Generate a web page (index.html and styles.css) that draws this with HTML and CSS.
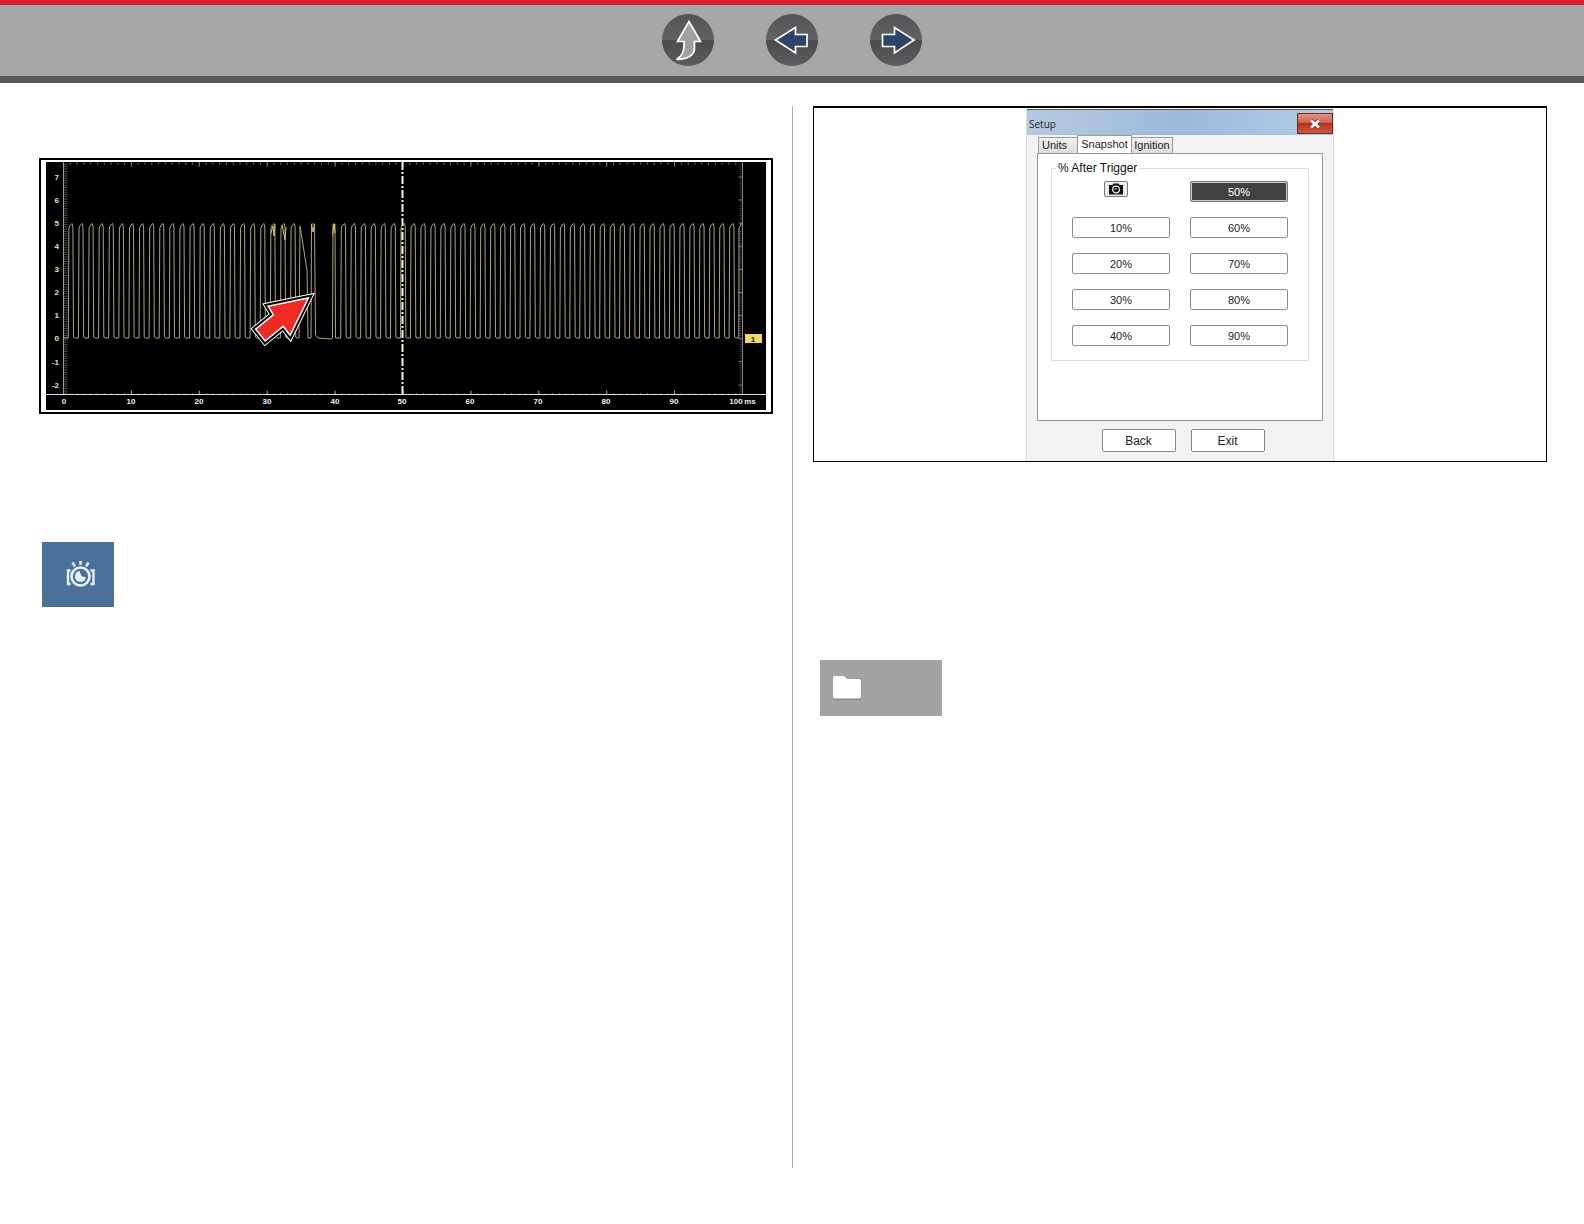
FILE: index.html
```
<!DOCTYPE html>
<html lang="en">
<head>
<meta charset="utf-8">
<meta name="viewport" content="width=device-width, initial-scale=1">
<title>Snapshot Setup</title>
<link rel="stylesheet" href="styles.css">
</head>
<body>
<header class="topbar">
  <nav class="topbar-nav" aria-label="Page navigation">
    <a href="#up" class="nav-link" aria-label="Up">
      <svg viewBox="0 0 52 52"><path d="M27 7.500 38.500 27.500H32.500V34C32.500 41 26 45 14.500 45.500 20.500 42 22 38 22 32V27.500H15.500Z" fill="#a0a0a0" stroke="#fff" stroke-width="1.700"/></svg>
    </a>
    <a href="#previous" class="nav-link" aria-label="Previous">
      <svg viewBox="0 0 52 52"><path d="M9.500 26 29.500 13.500V20.500H41V32.500H29.500V39Z" fill="#2b4468" stroke="#fff" stroke-width="1.700"/></svg>
    </a>
    <a href="#next" class="nav-link" aria-label="Next">
      <svg viewBox="0 0 52 52"><path d="M44 26 24.500 13.500V20.500H12.500V32.500H24.500V39Z" fill="#2b4468" stroke="#fff" stroke-width="1.700"/></svg>
    </a>
  </nav>
</header>
<main class="page">
  <section class="column column-left">
    <figure class="figure figure-scope">
      <svg class="scope" viewBox="0 0 720 248" role="img" aria-label="Scope waveform with signal dropout">
        <rect width="720" height="248" fill="#000"/>
        <g fill="none">
          <path d="M19.500 2V232" stroke="#4c4c4c" stroke-width="4" stroke-dasharray="1 1.310"/>
          <path d="M694.500 2V232" stroke="#444" stroke-width="2" stroke-dasharray="1 1.310"/>
          <path d="M694.500 14.500V232" stroke="#666" stroke-width="4" stroke-dasharray="1 22.100"/>
          <path d="M17 1.500H696" stroke="#555" stroke-width="3" stroke-dasharray="1 5.790"/>
          <path d="M17 2.500H696" stroke="#777" stroke-width="5" stroke-dasharray="1 66.900"/>
          <path d="M17 231.500H696" stroke="#555" stroke-width="1" stroke-dasharray="1 5.790"/>
          <path d="M17 230.500H696" stroke="#aaa" stroke-width="4" stroke-dasharray="1 66.900"/>
          <path d="M17.500 0V233" stroke="#999"/>
          <path d="M696.500 0V233" stroke="#888"/>
          <path d="M0 232.500H720" stroke="#ddd"/>
          <path id="trace" stroke="#a8a484" stroke-width="1"/>
          <path d="M225 71 227 64 228 74 229 62M236 63 239 78 240 65M265.500 62 267 70 268.500 62M286.500 73 288 62 289 71" stroke="#d8c660"/>
          <path d="M356.500 0V232" stroke="#f4f4ea" stroke-width="2" stroke-dasharray="8 2 2 2"/>
        </g>
        <g class="volt-labels">
          <text x="13" y="18">7</text><text x="13" y="41">6</text><text x="13" y="64">5</text><text x="13" y="87">4</text><text x="13" y="110">3</text>
          <text x="13" y="133">2</text><text x="13" y="156">1</text><text x="13" y="179">0</text><text x="13" y="203">-1</text><text x="13" y="226">-2</text>
        </g>
        <g class="time-labels">
          <text x="18" y="242">0</text><text x="85" y="242">10</text><text x="153" y="242">20</text><text x="221" y="242">30</text><text x="289" y="242">40</text>
          <text x="356" y="242">50</text><text x="424" y="242">60</text><text x="492" y="242">70</text><text x="560" y="242">80</text><text x="628" y="242">90</text>
          <text x="690" y="242">100</text><text x="704" y="242">ms</text>
        </g>
        <rect x="699" y="172" width="17" height="9" fill="#f0d964"/>
        <text class="channel-label" x="707" y="180">1</text>
        <g stroke-miterlimit="8">
          <path d="M261 137 223.300 144.700 228.300 153 210.700 167.300 219.300 178 237.300 163.300 244 172Z" fill="#fff" stroke="#fff" stroke-width="9"/>
          <path d="M261 137 223.300 144.700 228.300 153 210.700 167.300 219.300 178 237.300 163.300 244 172Z" fill="#000" stroke="#000" stroke-width="7"/>
          <path d="M261 137 223.300 144.700 228.300 153 210.700 167.300 219.300 178 237.300 163.300 244 172Z" fill="#fff" stroke="#fff" stroke-width="3"/>
          <path d="M261 137 223.300 144.700 228.300 153 210.700 167.300 219.300 178 237.300 163.300 244 172Z" fill="#ee2a24"/>
        </g>
      </svg>
    </figure>
    <button type="button" class="snapshot-button" aria-label="Snapshot">
      <svg viewBox="0 0 72 65" fill="none" stroke="#e8f4fb" stroke-width="2.600">
        <circle cx="38.500" cy="34.500" r="9"/>
        <path d="M37.500 29A5.500 5.500 0 1 0 44 35.500L39.500 34Z" fill="#e8f4fb" stroke="none"/>
        <path d="M38.500 19V23M30.500 20.500 33 24.500M46.500 20.500 44 24.500M28.500 28.500H26V42H28.500M48.500 28.500H51.500V42H48.500" stroke-width="2.400"/>
      </svg>
    </button>
  </section>
  <div class="divider"></div>
  <section class="column column-right">
    <figure class="figure figure-dialog">
      <div class="dialog">
        <div class="dialog-title">
          <span>Setup</span>
          <button type="button" class="close-button" aria-label="Close">
            <svg viewBox="0 0 12 10"><path d="M2 1.500 10 8.500M10 1.500 2 8.500" stroke="#7d2a20" stroke-width="4"/><path d="M2 1.500 10 8.500M10 1.500 2 8.500" stroke="#fff" stroke-width="2.600"/></svg>
          </button>
        </div>
        <div class="tabs" role="tablist">
          <button type="button" class="tab tab-units" role="tab">Units</button>
          <button type="button" class="tab tab-active" role="tab" aria-selected="true">Snapshot</button>
          <button type="button" class="tab tab-ignition" role="tab">Ignition</button>
        </div>
        <div class="panel">
          <fieldset class="trigger-group">
            <legend>% After Trigger</legend>
            <div class="trigger-grid">
              <button type="button" class="camera-button" aria-label="Take snapshot">
                <svg viewBox="0 0 16 12"><path d="M1 2H4.500L5.500 .5H10.500L11.500 2H15V11.500H1Z" fill="#111"/><circle cx="8" cy="6.500" r="3.400" fill="#111" stroke="#e8eee8" stroke-width="1.200"/><path d="M6.500 7 8.500 5" stroke="#e8eee8"/></svg>
              </button>
              <button type="button" class="choice choice-selected">50%</button>
              <button type="button" class="choice">10%</button>
              <button type="button" class="choice">60%</button>
              <button type="button" class="choice">20%</button>
              <button type="button" class="choice">70%</button>
              <button type="button" class="choice">30%</button>
              <button type="button" class="choice">80%</button>
              <button type="button" class="choice">40%</button>
              <button type="button" class="choice">90%</button>
            </div>
          </fieldset>
        </div>
        <div class="dialog-actions">
          <button type="button" class="action">Back</button>
          <button type="button" class="action">Exit</button>
        </div>
      </div>
    </figure>
    <button type="button" class="folder-button" aria-label="Open folder">
      <svg viewBox="0 0 30 26"><path d="M3 3H11Q12.500 3 13.500 4.500L14.500 6H27Q29 6 29 8V23Q29 25 27 25H3Q1 25 1 23V5Q1 3 3 3Z" fill="#777" opacity=".6"/><path d="M3 1H11Q12.500 1 13.500 2.500L14.500 4H27Q29 4 29 6V21.500Q29 23.500 27 23.500H3Q1 23.500 1 21.500V3Q1 1 3 1Z" fill="#fff"/></svg>
    </button>
  </section>
</main>
<script src="script.js"></script>
</body>
</html>
```
FILE: styles.css
```
* {
  box-sizing: border-box;
}

body {
  margin: 0;
  min-height: 100vh;
  display: flex;
  flex-direction: column;
  background: #fff;
  color: #222;
  font: 12px/16px "Liberation Sans", Arial, sans-serif;
}

button {
  margin: 0;
  padding: 0;
  font: inherit;
  color: inherit;
}

svg {
  display: block;
}

.topbar {
  padding: 9px 0 10px;
  background: #a7a7a7;
  border-top: 5px solid #d2202a;
  border-bottom: 7px solid #575757;
}

.topbar-nav {
  display: flex;
  justify-content: center;
  gap: 52px;
}

.nav-link {
  width: 52px;
  height: 52px;
  border-radius: 50%;
  background: linear-gradient(#545456, #636365 50%, #4b4b4d 50%, #5d5d5f);
}

.page {
  flex: 1;
  display: grid;
  grid-template-columns: 1fr 2px 1fr;
  gap: 19px;
  padding: 23px 37px 56px 39px;
}

.divider {
  border-left: 1px solid #a9abad;
}

.column {
  display: flex;
  flex-direction: column;
  align-items: flex-start;
  min-width: 0;
}

.column-left {
  padding-top: 52px;
  gap: 128px;
}

.column-right {
  gap: 198px;
}

.figure {
  width: 100%;
  margin: 0;
  border: 2px solid #000;
}

.figure-scope {
  padding: 2px 5px;
}

.figure-dialog {
  display: flex;
  justify-content: center;
  padding-top: 1px;
  border-width: 2px 1px 1px;
}

.scope {
  width: 100%;
  font-size: 8px;
  font-weight: bold;
}

.volt-labels {
  fill: #e6e3b4;
  text-anchor: end;
}

.time-labels {
  fill: #f2f2f2;
  text-anchor: middle;
}

.channel-label {
  fill: #222;
  text-anchor: middle;
}

.snapshot-button {
  width: 72px;
  height: 65px;
  margin-left: 3px;
  border: 0;
  background: #4b719b;
}

.folder-button {
  width: 122px;
  height: 56px;
  margin-left: 7px;
  padding-left: 12px;
  border: 0;
  background: #a3a3a3;
}

.folder-button svg {
  width: 30px;
  height: 26px;
}

.dialog {
  width: 308px;
  padding-bottom: 9px;
  background: #f2f2f2;
  border: solid #d8dde0;
  border-width: 0 1px;
}

.dialog-title {
  display: flex;
  justify-content: space-between;
  align-items: center;
  height: 26px;
  padding: 2px 0 0 2px;
  border-top: 1px solid #4b5661;
  background: linear-gradient(90deg, #b5c9de, #9dbadb 50%, #b3cbe5);
  font: 10px/16px "Open Sans", sans-serif;
}

.close-button {
  display: grid;
  place-items: center;
  width: 36px;
  height: 21px;
  border: 1px solid #6e2a24;
  background: linear-gradient(#dd9384, #cf5d49 50%, #b9301c 50%, #cc5943);
}

.close-button svg {
  width: 12px;
  height: 10px;
}

.tabs {
  display: flex;
  align-items: flex-end;
  height: 18px;
  padding-left: 11px;
  font-size: 11px;
}

.tab {
  height: 16px;
  padding: 0 2px 2px;
  border: 1px solid #999;
  border-bottom: 0;
  background: linear-gradient(#f0f0f0, #dcdcdc);
  line-height: 14px;
}

.tab-units {
  width: 39px;
  padding-left: 3px;
  border-right: 0;
  text-align: left;
}

.tab-ignition {
  width: 41px;
  border-left: 0;
}

.tab-active {
  width: 55px;
  height: 18px;
  background: #fff;
}

.panel {
  height: 268px;
  margin: 0 10px;
  padding: 6px 13px;
  border: 1px solid #999;
  background: #fff;
}

.trigger-group {
  margin: 0;
  padding: 5px 20px 14px;
  border: 1px solid #ddd;
}

.trigger-group legend {
  margin-left: -16px;
  padding: 0 2px;
  color: #111;
}

.trigger-grid {
  display: grid;
  grid-template-columns: 98px 98px;
  gap: 15px 20px;
  font-size: 11px;
}

.choice {
  height: 21px;
  border: 1px solid #8d8d8d;
  border-radius: 2px;
  background: #fff;
}

.choice-selected {
  border-color: #777;
  background: #424242;
  box-shadow: inset 0 0 0 1px #ccc;
  color: #fff;
}

.camera-button {
  display: grid;
  place-items: center;
  width: 24px;
  height: 16px;
  margin-left: 32px;
  border: 1px solid #777;
  border-radius: 2px;
  background: #e8eee8;
}

.camera-button svg {
  width: 16px;
  height: 12px;
}

.dialog-actions {
  display: flex;
  justify-content: center;
  gap: 15px;
  padding: 8px 0 0 6px;
}

.action {
  width: 74px;
  height: 23px;
  border: 1px solid #888;
  border-radius: 2px;
  background: #fff;
}
```
FILE: script.js
```
// Builds the square-wave trace, with its dropout between 37 and 40 ms.
const LOW = 176;

function pulse(x, width) {
  return `L${x} ${LOW} L${x + 0.6} 66 L${x + 2} 63 L${x + width - 0.8} 61.500 ` +
    `L${x + width} 65 L${x + width + 0.6} ${LOW - 1} L${x + width + 2} ${LOW} `;
}

let d = `M18 ${LOW} `;
for (let i = 0; i < 23; i++) d += pulse(22.3 + i * 10.1, 4.6);
d += `L253 ${LOW} L254 64 L261 108 L262 ${LOW} L265 ${LOW} L265.500 62 L268.500 62 L269.500 173 L272 ${LOW} L285 177 L286.500 ${LOW} L287 62 L289 62 L289.500 ${LOW} `;
for (let i = 0; i < 40; i++) d += pulse(294.7 + i * 9.96, 4.8);
d += `L692.800 ${LOW} L693 66 L696 61`;
document.getElementById("trace").setAttribute("d", d);
```
